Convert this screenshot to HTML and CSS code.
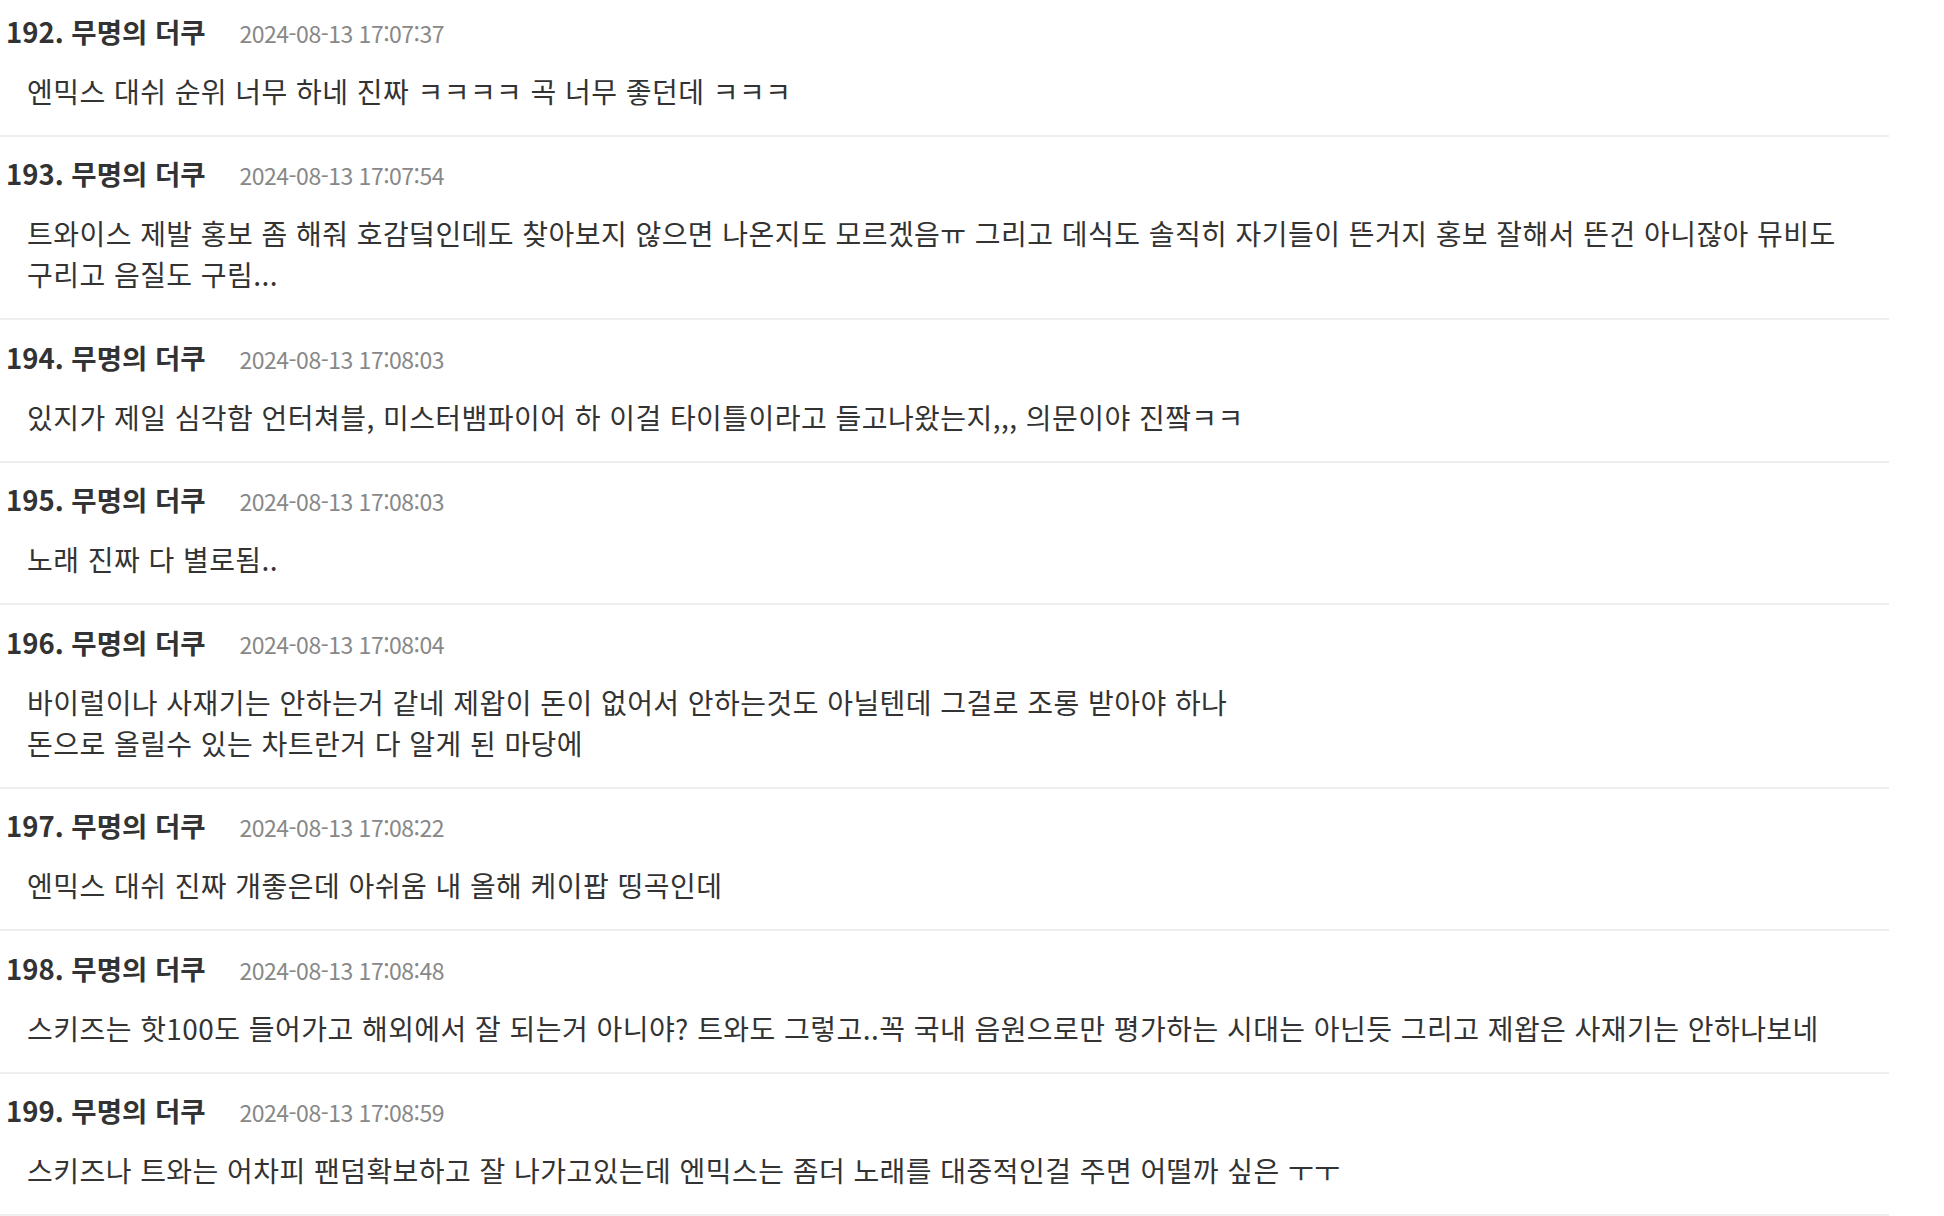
FILE: index.html
```html
<!DOCTYPE html>
<html lang="ko">
<head>
<meta charset="utf-8">
<title>댓글</title>
<link rel="stylesheet" href="styles.css">
</head>
<body>
<ul class="comments">
  <li class="comment">
    <div class="meta"><span class="name">192. 무명의 더쿠</span><span class="date">2024-08-13 17:07:37</span></div>
    <p class="text">엔믹스 대쉬 순위 너무 하네 진짜 ㅋㅋㅋㅋ 곡 너무 좋던데 ㅋㅋㅋ</p>
  </li>
  <li class="comment">
    <div class="meta"><span class="name">193. 무명의 더쿠</span><span class="date">2024-08-13 17:07:54</span></div>
    <p class="text">트와이스 제발 홍보 좀 해줘 호감덬인데도 찾아보지 않으면 나온지도 모르겠음ㅠ 그리고 데식도 솔직히 자기들이 뜬거지 홍보 잘해서 뜬건 아니잖아 뮤비도 구리고 음질도 구림...</p>
  </li>
  <li class="comment">
    <div class="meta"><span class="name">194. 무명의 더쿠</span><span class="date">2024-08-13 17:08:03</span></div>
    <p class="text">있지가 제일 심각함 언터쳐블, 미스터뱀파이어 하 이걸 타이틀이라고 들고나왔는지,,, 의문이야 진짴ㅋㅋ</p>
  </li>
  <li class="comment">
    <div class="meta"><span class="name">195. 무명의 더쿠</span><span class="date">2024-08-13 17:08:03</span></div>
    <p class="text">노래 진짜 다 별로됨..</p>
  </li>
  <li class="comment">
    <div class="meta"><span class="name">196. 무명의 더쿠</span><span class="date">2024-08-13 17:08:04</span></div>
    <p class="text">바이럴이나 사재기는 안하는거 같네 제왑이 돈이 없어서 안하는것도 아닐텐데 그걸로 조롱 받아야 하나<br>돈으로 올릴수 있는 차트란거 다 알게 된 마당에</p>
  </li>
  <li class="comment">
    <div class="meta"><span class="name">197. 무명의 더쿠</span><span class="date">2024-08-13 17:08:22</span></div>
    <p class="text">엔믹스 대쉬 진짜 개좋은데 아쉬움 내 올해 케이팝 띵곡인데</p>
  </li>
  <li class="comment">
    <div class="meta"><span class="name">198. 무명의 더쿠</span><span class="date">2024-08-13 17:08:48</span></div>
    <p class="text">스키즈는 핫100도 들어가고 해외에서 잘 되는거 아니야? 트와도 그렇고..꼭 국내 음원으로만 평가하는 시대는 아닌듯 그리고 제왑은 사재기는 안하나보네</p>
  </li>
  <li class="comment">
    <div class="meta"><span class="name">199. 무명의 더쿠</span><span class="date">2024-08-13 17:08:59</span></div>
    <p class="text">스키즈나 트와는 어차피 팬덤확보하고 잘 나가고있는데 엔믹스는 좀더 노래를 대중적인걸 주면 어떨까 싶은 ㅜㅜ</p>
  </li>
</ul>
</body>
</html>
```

FILE: styles.css
```css
html, body {
  margin: 0;
  padding: 0;
  background: #ffffff;
}

body {
  font-family: "Noto Sans CJK KR", "Noto Sans", sans-serif;
  color: #333333;
  overflow: hidden;
}

.comments {
  list-style: none;
  margin: -6px 0 0 0;
  padding: 0;
  width: 1889px;
}

.comment {
  padding: 16.5px 0 23px 0;
  border-bottom: 2px solid #eeeeee;
}

.meta {
  display: flex;
  align-items: baseline;
  padding-left: 6px;
  height: 41px;
  line-height: 41px;
  margin-bottom: 19px;
}

.name {
  font-size: 27.5px;
  font-weight: 700;
  color: #333333;
}

.date {
  margin-left: 34px;
  font-size: 23px;
  color: #888888;
  letter-spacing: -0.5px;
}

.text {
  margin: 0;
  padding-left: 27px;
  font-size: 28px;
  letter-spacing: 0.45px;
  line-height: 41px;
  color: #333333;
  word-break: keep-all;
}
```
